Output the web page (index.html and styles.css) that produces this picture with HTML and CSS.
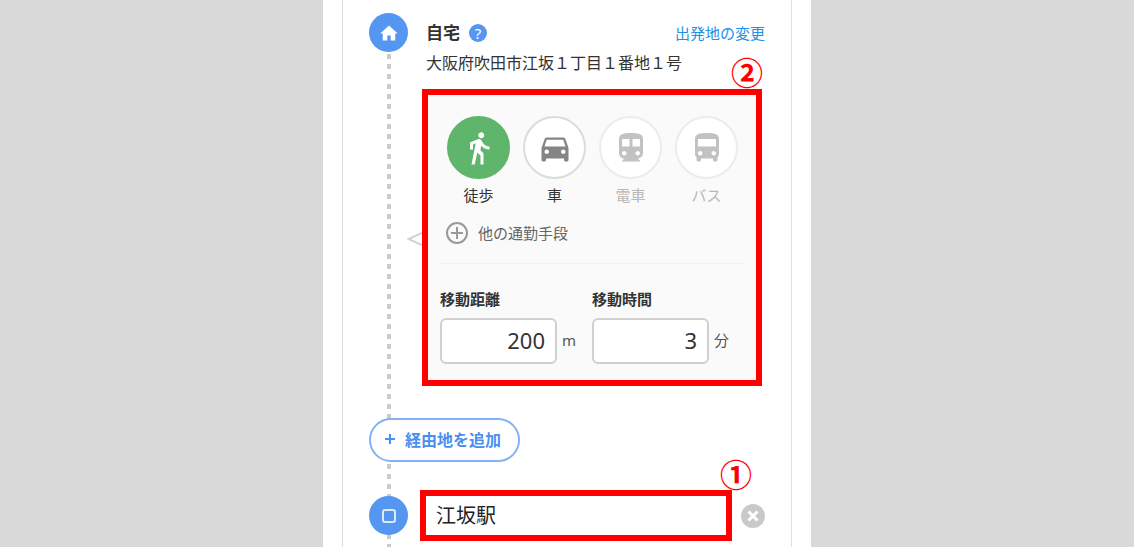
FILE: index.html
```html
<!DOCTYPE html>
<html lang="ja">
<head>
<meta charset="utf-8">
<meta name="viewport" content="width=device-width, initial-scale=1">
<title>通勤経路</title>
<link rel="stylesheet" href="styles.css">
</head>
<body>
<main class="sheet">
  <form class="route">
    <section class="stop">
      <span class="marker">
        <svg class="marker-icon" viewBox="0 0 24 24" aria-hidden="true"><path d="M10 21v-6h4v6h5.500v-8.500H22.500L12 3 1.500 12.500h3V21z"/></svg>
      </span>
      <div class="stop-body">
        <header class="stop-head">
          <h2 class="stop-name">自宅</h2>
          <button class="help" type="button" aria-label="ヘルプ">?</button>
          <a class="change" href="#">出発地の変更</a>
        </header>
        <p class="address">大阪府吹田市江坂１丁目１番地１号</p>
        <div class="panel">
          <span class="callout callout-panel">②</span>
          <svg class="pointer" viewBox="0 0 15 14" aria-hidden="true"><path d="M15 1 1.500 7 15 13"/></svg>
          <div class="modes">
            <label class="mode mode-active">
              <input class="mode-input" type="radio" name="mode" checked>
              <span class="mode-disc"><svg class="mode-icon" viewBox="0 0 24 24" aria-hidden="true"><path d="M13.500 5.500c1.100 0 2-.9 2-2s-.9-2-2-2-2 .9-2 2 .9 2 2 2zM9.800 8.900 7 23h2.100l1.800-8 2.100 2v6h2v-7.500l-2.100-2 .6-3C14.800 12 16.800 13 19 13v-2c-1.900 0-3.500-1-4.300-2.400l-1-1.600c-.4-.6-1-1-1.700-1-.3 0-.5.1-.8.1L6 8.300V13h2V9.600l1.800-.7"/></svg></span>
              <span class="mode-name">徒歩</span>
            </label>
            <label class="mode">
              <input class="mode-input" type="radio" name="mode">
              <span class="mode-disc"><svg class="mode-icon" viewBox="0 0 24 24" aria-hidden="true"><path d="M18.920 6.010C18.720 5.420 18.160 5 17.500 5h-11c-.66 0-1.210.42-1.420 1.010L3 12v8c0 .55.45 1 1 1h1c.55 0 1-.45 1-1v-1h12v1c0 .55.45 1 1 1h1c.55 0 1-.45 1-1v-8l-2.080-5.990zM6.500 16c-.83 0-1.500-.67-1.500-1.500S5.670 13 6.500 13s1.500.67 1.500 1.500S7.330 16 6.500 16zm11 0c-.83 0-1.500-.67-1.500-1.500s.67-1.500 1.500-1.500 1.500.67 1.500 1.500-.67 1.500-1.500 1.500zM5 11l1.500-4.500h11L19 11H5z"/></svg></span>
              <span class="mode-name">車</span>
            </label>
            <label class="mode mode-disabled">
              <input class="mode-input" type="radio" name="mode" disabled>
              <span class="mode-disc"><svg class="mode-icon" viewBox="0 0 24 24" aria-hidden="true"><path d="M12 2c-4.420 0-8 .5-8 4v9.500C4 17.430 5.570 19 7.500 19L6 20.500v.5h12v-.5L16.500 19c1.930 0 3.500-1.570 3.500-3.500V6c0-3.500-3.580-4-8-4zM7.500 17c-.83 0-1.500-.67-1.500-1.500S6.670 14 7.500 14s1.500.67 1.500 1.500S8.330 17 7.500 17zm3.500-6H6V6h5v5zm5.500 6c-.83 0-1.500-.67-1.500-1.500s.67-1.500 1.500-1.500 1.500.67 1.500 1.500-.67 1.500-1.500 1.500zm1.500-6h-5V6h5v5z"/></svg></span>
              <span class="mode-name">電車</span>
            </label>
            <label class="mode mode-disabled">
              <input class="mode-input" type="radio" name="mode" disabled>
              <span class="mode-disc"><svg class="mode-icon" viewBox="0 0 24 24" aria-hidden="true"><path d="M4 16c0 .88.39 1.670 1 2.220V20c0 .55.45 1 1 1h1c.55 0 1-.45 1-1v-1h8v1c0 .55.45 1 1 1h1c.55 0 1-.45 1-1v-1.780c.61-.55 1-1.340 1-2.220V6c0-3.500-3.580-4-8-4s-8 .5-8 4v10zm3.500 1c-.83 0-1.500-.67-1.500-1.500S6.670 14 7.500 14s1.500.67 1.500 1.500S8.330 17 7.500 17zm9 0c-.83 0-1.500-.67-1.500-1.500s.67-1.500 1.500-1.500 1.500.67 1.500 1.500-.67 1.500-1.500 1.500zm1.500-6H6V6h12v5z"/></svg></span>
              <span class="mode-name">バス</span>
            </label>
          </div>
          <button class="other" type="button">
            <svg class="other-icon" viewBox="0 0 22 22" aria-hidden="true"><circle cx="11" cy="11" r="10"/><path d="M11 5v12M5 11h12"/></svg>
            他の通勤手段
          </button>
          <div class="fields">
            <div class="field">
              <label class="field-label" for="distance">移動距離</label>
              <div class="field-row"><input class="field-input" id="distance" type="text" inputmode="numeric" value="200"><span class="unit">m</span></div>
            </div>
            <div class="field">
              <label class="field-label" for="duration">移動時間</label>
              <div class="field-row"><input class="field-input" id="duration" type="text" inputmode="numeric" value="3"><span class="unit">分</span></div>
            </div>
          </div>
        </div>
      </div>
    </section>
    <button class="add" type="button">
      <svg class="add-icon" viewBox="0 0 12 12" aria-hidden="true"><path d="M6 1v10M1 6h10"/></svg>
      経由地を追加
    </button>
    <section class="destination">
      <span class="marker">
        <svg class="square-icon" viewBox="0 0 16 16" aria-hidden="true"><rect x="2" y="2" width="12" height="12" rx="2"/></svg>
      </span>
      <div class="station">
        <span class="callout callout-station">①</span>
        <input class="station-input" type="text" value="江坂駅" aria-label="目的地">
      </div>
      <button class="clear" type="button" aria-label="クリア">
        <svg class="clear-icon" viewBox="0 0 24 24" aria-hidden="true"><path d="m7.500 7.500 9 9M16.500 7.500l-9 9"/></svg>
      </button>
    </section>
  </form>
</main>
</body>
</html>
```

FILE: styles.css
```css
* {
  box-sizing: border-box;
}

body {
  margin: 0;
  background: #d9d9d9;
  color: #333;
  font-family: "Noto Sans", "Noto Sans CJK JP", sans-serif;
  font-size: 15px;
}

button,
input {
  margin: 0;
  padding: 0;
  font: inherit;
  color: inherit;
}

button {
  border: 0;
  background: none;
  cursor: pointer;
}

.sheet {
  display: flex;
  max-width: 488px;
  min-height: 100vh;
  margin: 0 auto;
  padding: 0 19px;
  background: #fff;
}

.route {
  flex: 1;
  min-width: 0;
  padding: 13px 26px 5px;
  border: solid #e0e0e0;
  border-width: 0 1px;
  background: repeating-linear-gradient(#fff 0 4px, #ccc 4px 9px, #fff 9px 10px) 44px 20px / 4px 100% no-repeat;
}

.stop {
  display: grid;
  grid-template-columns: 39px minmax(0, 1fr);
  column-gap: 14px;
}

.marker {
  display: flex;
  align-items: center;
  justify-content: center;
  width: 39px;
  height: 39px;
  border-radius: 50%;
  background: #5596f0;
}

.marker-icon {
  width: 20px;
  height: 20px;
  fill: #fff;
}

.square-icon {
  width: 16px;
  height: 16px;
  fill: none;
  stroke: #dbe9ff;
  stroke-width: 2;
}

.stop-head {
  display: flex;
  align-items: center;
  height: 39px;
  padding-left: 4px;
}

.stop-name {
  margin: 0;
  font-size: 17px;
  line-height: 24px;
}

.help {
  width: 18px;
  height: 18px;
  margin-left: 9px;
  border-radius: 50%;
  background: #5596f0;
  color: #fff;
  font-size: 15px;
  line-height: 18px;
}

.change {
  margin-left: auto;
  color: #2090e8;
  text-decoration: none;
}

.address {
  margin: 0 0 15px;
  padding-left: 4px;
  font-size: 16px;
  line-height: 22px;
}

.panel {
  position: relative;
  margin-right: 3px;
  padding: 21px 12px 16px;
  border: 6px solid #f00;
  background: #fafafa;
}

.callout {
  position: absolute;
  bottom: 100%;
  color: #f00;
  font-family: "Noto Sans CJK JP", sans-serif;
  font-size: 32px;
  font-weight: 700;
  line-height: 32px;
}

.callout-panel {
  right: -7px;
  margin-bottom: 8px;
}

.callout-station {
  right: -20px;
  margin-bottom: 1px;
}

.pointer {
  position: absolute;
  top: 137px;
  right: 100%;
  width: 15px;
  height: 14px;
  margin-right: 6px;
  fill: none;
  stroke: #d4d4d4;
  stroke-width: 2;
}

.modes {
  display: flex;
  justify-content: space-between;
  padding: 0 6px 0 7px;
}

.mode {
  position: relative;
  display: flex;
  flex-direction: column;
  align-items: center;
  gap: 6px;
}

.mode-input {
  position: absolute;
  opacity: 0;
}

.mode-disc {
  display: flex;
  align-items: center;
  justify-content: center;
  width: 63px;
  height: 63px;
  border: 2px solid #dcdcdc;
  border-radius: 50%;
  background: #fff;
}

.mode-icon {
  width: 36px;
  height: 36px;
  fill: #858585;
}

.mode-active .mode-disc {
  border-color: #5fb56b;
  background: #5fb56b;
}

.mode-active .mode-icon {
  fill: #fff;
}

.mode-disabled {
  color: #b8b8b8;
}

.mode-disabled .mode-disc {
  border-color: #ececec;
}

.mode-disabled .mode-icon {
  fill: #c2c2c2;
}

.mode-name {
  line-height: 20px;
}

.other {
  display: flex;
  align-items: center;
  gap: 10px;
  height: 24px;
  margin: 16px 0 18px 6px;
  color: #666;
  line-height: 20px;
}

.other-icon {
  width: 22px;
  height: 22px;
  fill: none;
  stroke: #999;
  stroke-width: 2;
}

.fields {
  display: grid;
  grid-template-columns: 1fr 1fr;
  padding-top: 24px;
  border-top: 1px solid #f0f0f0;
}

.field-label {
  display: block;
  margin-bottom: 8px;
  font-weight: 700;
  line-height: 22px;
}

.field-row {
  display: flex;
  align-items: center;
  gap: 5px;
}

.field-input {
  width: 117px;
  height: 46px;
  padding: 0 10px 2px;
  border: 2px solid #d0d0d0;
  border-radius: 6px;
  background: #fff;
  font-size: 22px;
  text-align: right;
}

.unit {
  padding-bottom: 3px;
  color: #555;
}

.add {
  display: flex;
  align-items: center;
  gap: 9px;
  height: 44px;
  margin: 32px 0 28px;
  padding: 0 17px 2px 13px;
  border: 2px solid #82b1f5;
  border-radius: 22px;
  background: #fff;
  color: #4a8fef;
  font-size: 16px;
  font-weight: 700;
}

.add-icon {
  width: 12px;
  height: 12px;
  fill: none;
  stroke: #4a8fef;
  stroke-width: 2;
}

.destination {
  display: grid;
  grid-template-columns: 39px minmax(0, 1fr) 24px;
  align-items: center;
  column-gap: 9px;
}

.station {
  position: relative;
  margin-left: 3px;
}

.station-input {
  display: block;
  width: 100%;
  height: 51px;
  padding: 0 10px 2px;
  border: 6px solid #f00;
  background: #fff;
  color: #222;
  font-size: 20px;
}

.clear {
  display: flex;
  width: 24px;
  height: 24px;
  border-radius: 50%;
  background: #c9c9c9;
}

.clear-icon {
  width: 24px;
  height: 24px;
  fill: none;
  stroke: #fff;
  stroke-width: 3;
}
```
